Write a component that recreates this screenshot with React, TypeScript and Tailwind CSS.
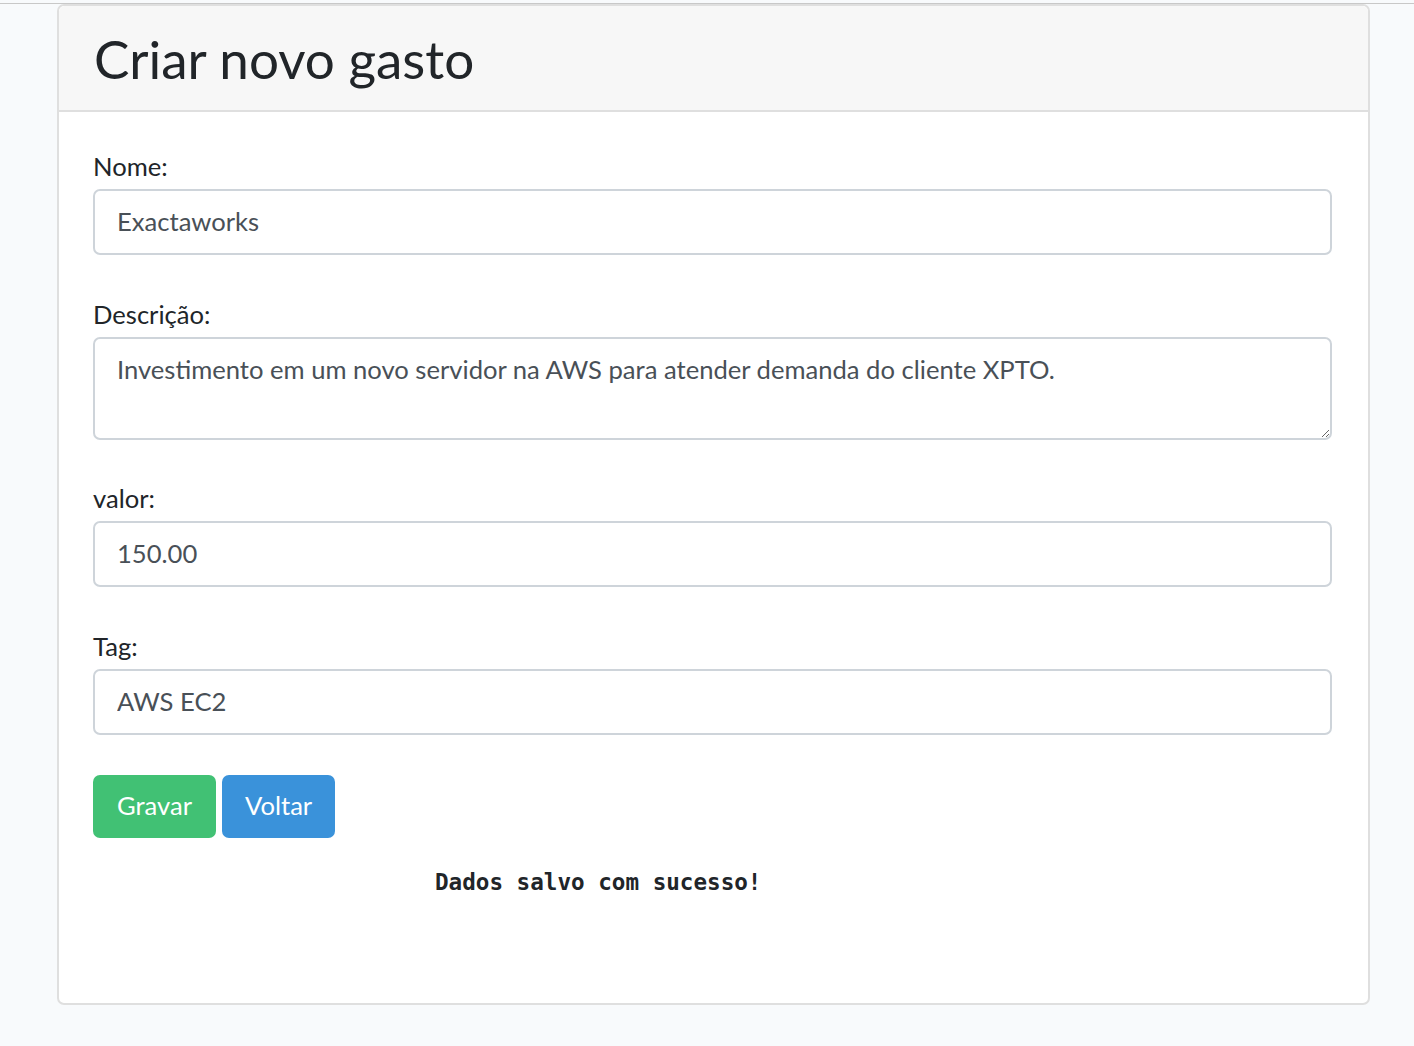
import { useState } from "react";

const fields = [
  { label: "Nome:", value: "Exactaworks" },
  { label: "valor:", value: "150.00" },
  { label: "Tag:", value: "AWS EC2" },
];

function Label({ children }: { children: React.ReactNode }) {
  return <label className="block h-[41px] text-[25.6px] leading-[37px] text-[#212529]">{children}</label>;
}

function Field({ label, value }: { label: string; value: string }) {
  const [v, setV] = useState(value);
  return (
    <div className="mb-[41px]">
      <Label>{label}</Label>
      <input
        value={v}
        onChange={(e) => setV(e.target.value)}
        className="block h-[66px] w-full rounded-[7px] border-2 border-[#ced4da] bg-white px-[22px] pb-[3px] text-[25.6px] text-[#495057] outline-none"
      />
    </div>
  );
}

export default function App() {
  const [desc, setDesc] = useState(
    "Investimento em um novo servidor na AWS para atender demanda do cliente XPTO."
  );
  return (
    <div className="min-h-[1046px] bg-[#f8fafc] font-['Lato',sans-serif]">
      <div className="h-[3px]" />
      <div className="h-px bg-[#c8c8c8]" />
      <div className="ml-[57px] w-[1313px] rounded-[7px] border-2 border-[#dfdfdf] bg-white">
        <div className="flex h-[106px] items-center rounded-t-[6px] border-b-2 border-[#dfdfdf] bg-[#f7f7f7] px-[35px]">
          <h1 className="text-[53px] leading-none text-[#212529]">Criar novo gasto</h1>
        </div>
        <div className="pl-[34px] pr-[36px] pt-[36px] pb-[109px]">
          <Field {...fields[0]} />
          <div className="mb-[40px]">
            <Label>Descrição:</Label>
            <textarea
              value={desc}
              onChange={(e) => setDesc(e.target.value)}
              className="block h-[103px] w-full resize-y rounded-[7px] border-2 border-[#ced4da] bg-white px-[22px] pt-[10px] text-[25.6px] leading-[41px] text-[#495057] outline-none"
            />
          </div>
          <Field {...fields[1]} />
          <Field {...fields[2]} />
          <div className="-mt-px flex gap-[6px]">
            <button className="h-[63px] rounded-[7px] bg-[#41c174] px-[24px] pb-[3px] text-[25.6px] text-white">Gravar</button>
            <button className="h-[63px] rounded-[7px] bg-[#3a92da] px-[23px] pb-[3px] text-[25.6px] text-white">Voltar</button>
          </div>
          <p className="mt-[33px] pl-[342px] font-['DejaVu_Sans_Mono',monospace] text-[22.6px] font-bold leading-none text-[#212529]">
            Dados salvo com sucesso!
          </p>
        </div>
      </div>
    </div>
  );
}
